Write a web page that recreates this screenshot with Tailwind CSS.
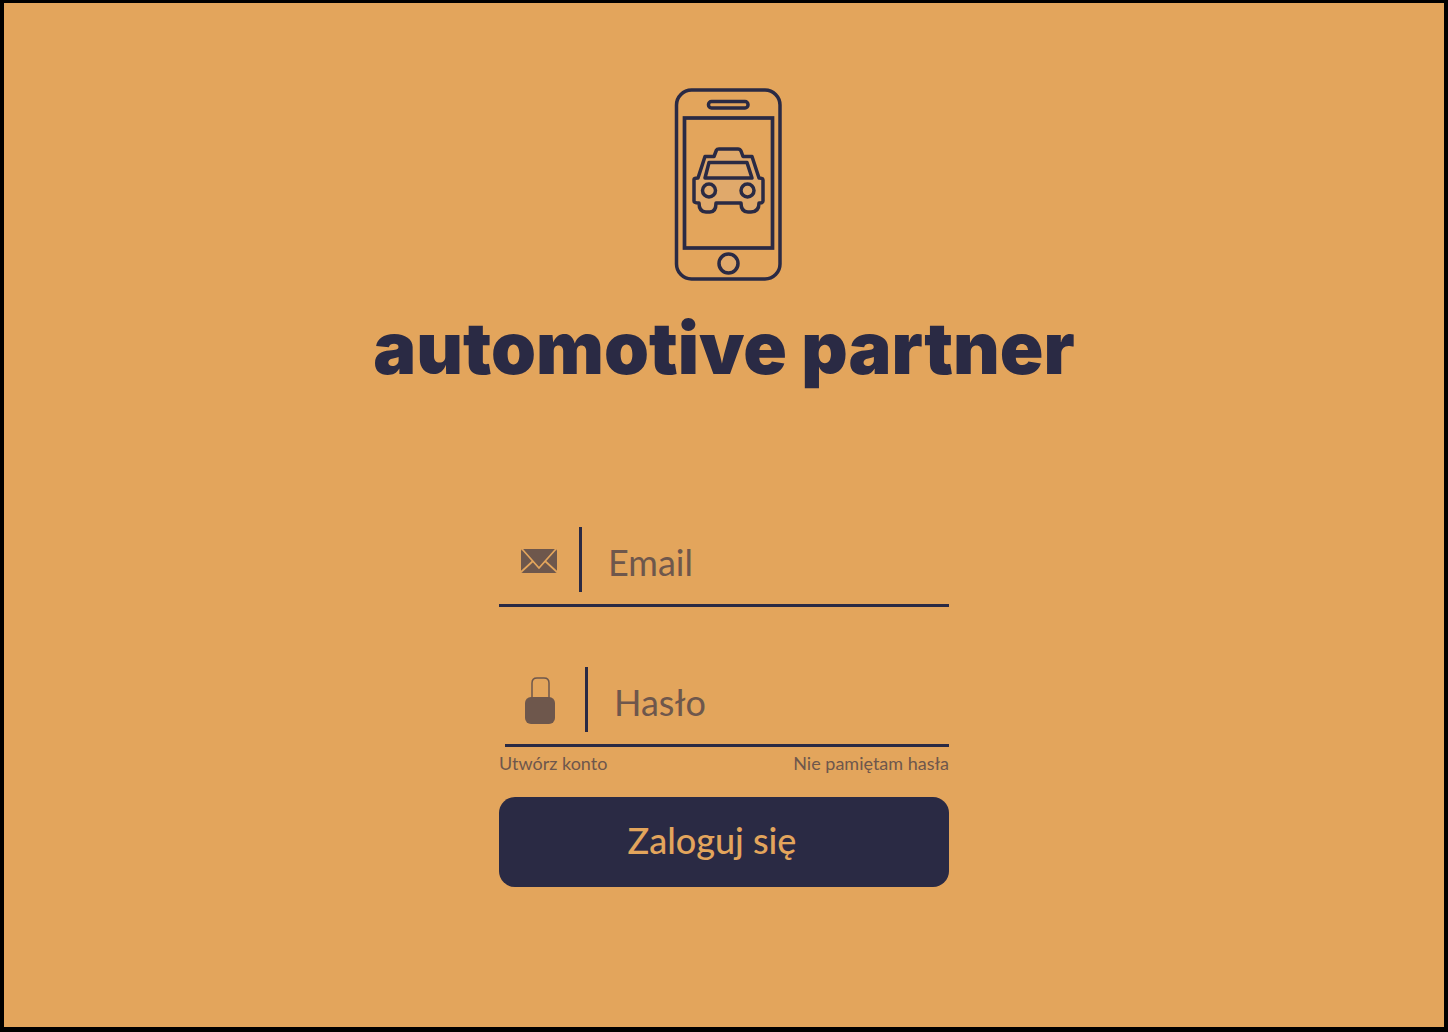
<!DOCTYPE html>
<html lang="pl">
<head>
<meta charset="utf-8">
<meta name="viewport" content="width=device-width, initial-scale=1">
<title>automotive partner</title>
<script src="https://cdn.jsdelivr.net/npm/@tailwindcss/browser@4"></script>
</head>
<body class="min-h-screen flex flex-col bg-black pt-[3px] px-1 pb-[5px] font-['Lato',sans-serif]">
<main class="grow flex flex-col items-center bg-[#e3a55c] pt-[85px] pb-16 text-[#2a2a44]">
  <header class="flex flex-col items-center">
    <svg class="ml-2 w-[108px] h-[194px]" viewBox="674 88 108 194" fill="none" stroke="currentColor" stroke-width="3.500" stroke-linejoin="round" aria-hidden="true">
      <rect x="676.5" y="90" width="103.500" height="189" rx="15"/>
      <rect x="708.500" y="101.500" width="39.500" height="6.500" rx="3"/>
      <rect x="684.500" y="118" width="88" height="130" stroke-linejoin="miter" stroke-width="3.700"/>
      <path fill="#e0a96b" d="M694 179.500Q694 178 698 178L705 156.500H714L716.500 150Q717 149 719 149H738Q740 149 741 151L743 156.500H752L759 178Q763 178 763 180V201Q763 203 759 203Q759 212 751 212H748Q741 212 741 203H716Q716 212 710 212H706Q699 212 699 203Q694 203 694 201Z"/>
      <path fill="#e0a96b" d="M709 162.500H747L752 178H705Z"/>
      <circle cx="709" cy="190.500" r="6.500"/>
      <circle cx="747.500" cy="190.500" r="6.500"/>
      <circle cx="728.500" cy="263.500" r="9.500" fill="#e0a96b"/>
    </svg>
    <h1 class="mt-[26px] font-['Inter',sans-serif] text-[72px] leading-[80px] font-black whitespace-nowrap">automotive partner</h1>
  </header>

  <form class="w-[450px] mt-[139px]">
    <div class="flex h-20 border-b-3">
      <label for="email" class="w-20 shrink-0 pl-[22px] pt-[22px] text-[#6e574c]">
        <svg class="w-9 h-6" viewBox="0 0 36 24" role="img" aria-label="Email">
          <rect width="36" height="24" rx="2" fill="currentColor"/>
          <path d="M1 0L18 19L35 0M0 23L12 12M36 23L24 12" fill="none" stroke="#e3a55c" stroke-width="1.700"/>
        </svg>
      </label>
      <input id="email" type="email" placeholder="Email" class="w-full min-w-0 h-[65px] border-l-3 border-[#2a2a44] pl-[26px] pt-1 text-4xl text-[#6e574c] placeholder:text-[#6e574c] outline-none">
    </div>
    <div class="flex h-20 mt-[60px] ml-[6px] border-b-3">
      <label for="password" class="w-20 shrink-0 pl-5 pt-[10px] text-[#6e574c]">
        <svg class="w-[30px] h-[47px]" viewBox="0 0 30 47" role="img" aria-label="Hasło">
          <rect y="20" width="30" height="27" rx="6" fill="currentColor"/>
          <path d="M7 22V6Q7 1 12 1H19Q24 1 24 6V22" fill="none" stroke="currentColor" stroke-width="1.500"/>
        </svg>
      </label>
      <input id="password" type="password" placeholder="Hasło" class="w-full min-w-0 h-[65px] border-l-3 border-[#2a2a44] pl-[26px] pt-1 text-4xl text-[#6e574c] placeholder:text-[#6e574c] outline-none">
    </div>
    <div class="flex justify-between mt-1 text-lg leading-6 text-[#6e574c]">
      <a href="#">Utwórz konto</a>
      <a href="#">Nie pamiętam hasła</a>
    </div>
    <button type="submit" class="mt-[22px] w-full h-[90px] rounded-2xl bg-[#2a2a44] pr-6 pb-1 text-4xl font-medium text-[#e3a55c]">Zaloguj się</button>
  </form>
</main>
</body>
</html>
